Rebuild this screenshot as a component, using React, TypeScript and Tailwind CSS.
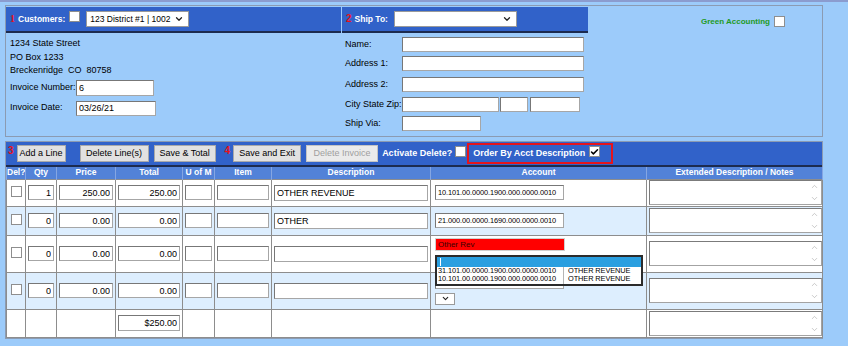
import React from 'react';
import { ChevronDown, ChevronUp, Check } from 'lucide-react';

const inputCls =
  'h-[15px] border border-[#a6a6a6] border-t-[#777] border-l-[#777] bg-white px-[2px] leading-[13px] text-black outline-none';

const Box: React.FC<{ checked?: boolean }> = ({ checked }) => (
  <span className="inline-flex h-[11px] w-[11px] shrink-0 items-center justify-center border border-[#8e8e8e] bg-white">
    {checked && <Check size={10} strokeWidth={4} className="text-black" />}
  </span>
);

const Num: React.FC<{ n: string; className?: string }> = ({ n, className = '' }) => (
  <span className={`text-[10px] font-bold leading-none text-[#e8121a] ${className}`}>{n}</span>
);

const Field: React.FC<{ w?: string; value?: string; right?: boolean; small?: boolean; h?: string }> = ({
  w = 'w-full',
  value = '',
  right,
  small,
  h,
}) => (
  <input
    readOnly
    value={value}
    className={`${inputCls} ${w} ${h ?? ''} ${right ? 'text-right' : ''} ${small ? 'text-[7.4px] tracking-[-0.1px]' : 'text-[9px]'} block`}
  />
);

const Select: React.FC<{ w: string; value?: string }> = ({ w, value = '' }) => (
  <div className={`flex h-[16px] ${w} items-center justify-between border border-[#9a9a9a] bg-white pl-[3px] pr-[4px] text-[8.5px] text-black`}>
    <span className="whitespace-nowrap">{value}</span>
    <ChevronDown size={10} strokeWidth={3} className="shrink-0 text-[#222]" />
  </div>
);

const Notes = () => (
  <div className="flex h-[25px] w-[173px] flex-col items-end justify-between border border-[#a3a3a3] border-t-[#7b7b7b] border-l-[#7b7b7b] bg-white py-[1px] pr-[2px]">
    <ChevronUp size={9} strokeWidth={1.6} className="text-[#a8a8a8]" />
    <ChevronDown size={9} strokeWidth={1.6} className="text-[#a8a8a8]" />
  </div>
);

const Btn: React.FC<{ label: string; w: string; disabled?: boolean }> = ({ label, w, disabled }) => (
  <div
    className={`flex h-[17px] ${w} items-center justify-center border text-[9px] ${
      disabled ? 'border-[#c4c4c4] bg-[#ebebeb] text-[#9f9f9f]' : 'border-[#a9a9a9] bg-[#e1e1e1] text-black'
    }`}
  >
    {label}
  </div>
);

const TopPanel = () => (
  <div className="flex h-[132px] w-[818px] border border-[#8b9bb2] pt-[1px]">
    <div className="w-[335px]">
      <div className="flex h-[26px] items-center border-b-2 border-[#1c2b4f] bg-[#3162c9] pl-[4px]">
        <Num n="1" className="font-['Liberation_Serif',serif]" />
        <span className="ml-[3px] text-[8.5px] font-bold text-white">Customers:</span>
        <span className="ml-[4px]">
          <Box />
        </span>
        <span className="ml-[6px]">
          <Select w="w-[103px]" value="123 District #1 | 1002" />
        </span>
      </div>
      <div className="pl-[4px] pt-[4px] leading-[13.5px]">
        <div>1234 State Street</div>
        <div>PO Box 1233</div>
        <div>Breckenridge&nbsp; CO&nbsp; 80758</div>
        <div className="mt-[2px] flex items-center">
          <span className="w-[66px]">Invoice Number:</span>
          <Field w="w-[78px]" h="h-[16px]" value="6" />
        </div>
        <div className="mt-[5px] flex items-center">
          <span className="w-[66px]">Invoice Date:</span>
          <Field w="w-[80px]" value="03/26/21" />
        </div>
      </div>
    </div>
    <div className="ml-[1px] w-[246px]">
      <div className="flex h-[26px] items-center border-b-2 border-[#1c2b4f] bg-[#3162c9] pl-[4px]">
        <Num n="2" />
        <span className="ml-[3px] text-[8.5px] font-bold text-white">Ship To:</span>
        <span className="ml-[6px]">
          <Select w="w-[123px]" />
        </span>
      </div>
      <div className="pl-[3px]">
        <div className="mt-[4px] flex items-center">
          <span className="w-[57px]">Name:</span>
          <Field w="w-[182px]" />
        </div>
        <div className="mt-[4px] flex items-center">
          <span className="w-[57px]">Address 1:</span>
          <Field w="w-[182px]" />
        </div>
        <div className="mt-[6px] flex items-center">
          <span className="w-[57px]">Address 2:</span>
          <Field w="w-[182px]" />
        </div>
        <div className="mt-[5px] flex items-center">
          <span className="w-[57px] whitespace-nowrap">City State Zip:</span>
          <Field w="w-[97px]" />
          <span className="ml-[1px]">
            <Field w="w-[28px]" />
          </span>
          <span className="ml-[2px]">
            <Field w="w-[50px]" />
          </span>
        </div>
        <div className="mt-[4px] flex items-center">
          <span className="w-[57px]">Ship Via:</span>
          <Field w="w-[79px]" />
        </div>
      </div>
    </div>
    <div className="flex flex-1 justify-end pr-[37px] pt-[9px]">
      <div className="flex h-[11px] items-center">
        <span className="mr-[4px] text-[8px] font-bold text-[#1f9a1f]">Green Accounting</span>
        <Box />
      </div>
    </div>
  </div>
);

type Line = { qty: string; price: string; total: string; desc: string; acct?: string; light?: boolean };

const lines: Line[] = [
  { qty: '1', price: '250.00', total: '250.00', desc: 'OTHER REVENUE', acct: '10.101.00.0000.1900.000.0000.0010' },
  { qty: '0', price: '0.00', total: '0.00', desc: 'OTHER', acct: '21.000.00.0000.1690.000.0000.0010', light: true },
];

const td = 'border border-[#8d8d8d] px-[2px] align-middle';

const Row: React.FC<{ l: Line; h: string; account: React.ReactNode; acctTop?: boolean }> = ({ l, h, account, acctTop }) => (
  <tr className={`${h} ${l.light ? 'bg-[#ddeefe]' : 'bg-white'}`}>
    <td className={`${td} text-center`}>
      <span className="inline-flex pt-[2px]">
        <Box />
      </span>
    </td>
    <td className={td}>
      <Field right value={l.qty} />
    </td>
    <td className={td}>
      <Field right value={l.price} />
    </td>
    <td className={td}>
      <Field right value={l.total} />
    </td>
    <td className={td}>
      <Field />
    </td>
    <td className={td}>
      <Field />
    </td>
    <td className={td}>
      <Field value={l.desc} h="h-[16px]" />
    </td>
    <td className={`border border-[#8d8d8d] pl-[4px] ${acctTop ? 'align-top' : 'align-middle'}`}>{account}</td>
    <td className={td}>
      <Notes />
    </td>
  </tr>
);

const LinesPanel = () => (
  <div className="mt-[4px] w-[818px] border border-[#8b9bb2]">
    <div className="flex h-[25px] items-center border-b-2 border-[#1c2b4f] bg-[#3162c9] pl-[2px]">
      <Num n="3" className="-mt-[5px]" />
      <span className="ml-[3px]">
        <Btn label="Add a Line" w="w-[49px]" />
      </span>
      <span className="ml-[14px]">
        <Btn label="Delete Line(s)" w="w-[69px]" />
      </span>
      <span className="ml-[5px]">
        <Btn label="Save & Total" w="w-[62px]" />
      </span>
      <Num n="4" className="-mt-[5px] ml-[9px]" />
      <span className="ml-[3px]">
        <Btn label="Save and Exit" w="w-[68px]" />
      </span>
      <span className="ml-[5px]">
        <Btn label="Delete Invoice" w="w-[72px]" disabled />
      </span>
      <span className="ml-[4px] text-[9px] font-bold text-white">Activate Delete?</span>
      <span className="ml-[3px]">
        <Box />
      </span>
      <div className="ml-[1px] flex h-[21px] w-[146px] items-center border-2 border-[#e5141c] pl-[4px]">
        <span className="text-[9px] font-bold text-white">Order By Acct Description</span>
        <span className="ml-[4px]">
          <Box checked />
        </span>
      </div>
    </div>
    <table className="w-[816px] table-fixed border-collapse">
      <colgroup>
        <col className="w-[19px]" />
        <col className="w-[31px]" />
        <col className="w-[59px]" />
        <col className="w-[67px]" />
        <col className="w-[32px]" />
        <col className="w-[57px]" />
        <col className="w-[159px]" />
        <col className="w-[216px]" />
        <col className="w-[176px]" />
      </colgroup>
      <thead>
        <tr className="h-[12px] bg-[#5282d8] text-[8.5px] font-bold leading-[11px] text-white">
          {['Del?', 'Qty', 'Price', 'Total', 'U of M', 'Item', 'Description', 'Account', 'Extended Description / Notes'].map(
            (c) => (
              <th key={c} className="overflow-hidden whitespace-nowrap border-x border-[#85a6e2] p-0 text-center">
                {c}
              </th>
            )
          )}
        </tr>
      </thead>
      <tbody>
        <Row l={lines[0]} h="h-[27px]" account={<Field w="w-[129px]" small value={lines[0].acct} />} />
        <Row l={lines[1]} h="h-[29px]" account={<Field w="w-[129px]" small value={lines[1].acct} />} />
        <Row
          l={{ qty: '0', price: '0.00', total: '0.00', desc: '' }}
          h="h-[37px]"
          acctTop
          account={
            <div className="pt-[2px]">
              <div className="h-[13px] w-[130px] border border-[#cfcfcf] bg-[#ff0000] pl-[2px] text-[8px] leading-[11px] text-[#3a0000]">
                Other Rev
              </div>
              <div className="relative mt-[4px] w-[129px]">
                <Field w="w-[129px]" small />
                <div className="absolute left-0 top-0 z-10 h-[31px] w-[208px] border-2 border-[#2b2b2b] bg-white">
                  <div className="flex h-[10px] items-center bg-[#2a9fe0] pl-[3px]">
                    <span className="h-[8px] w-[1px] bg-white" />
                  </div>
                  {['31.101.00.0000.1900.000.0000.0010', '10.101.00.0000.1900.000.0000.0010'].map((a) => (
                    <div key={a} className="flex text-[7.4px] leading-[8.5px] tracking-[-0.1px] text-black">
                      <span className="w-[127px] border-r border-[#b5b5b5] pl-[1px]">{a}</span>
                      <span className="pl-[4px]">OTHER REVENUE</span>
                    </div>
                  ))}
                </div>
              </div>
            </div>
          }
        />
        <Row
          l={{ qty: '0', price: '0.00', total: '0.00', desc: '', light: true }}
          h="h-[37px]"
          acctTop
          account={
            <div className="pt-[1px]">
              <Field w="w-[129px]" small />
              <div className="mt-[4px] flex h-[12px] w-[20px] items-center justify-center border border-[#9a9a9a] bg-white">
                <ChevronDown size={9} strokeWidth={3} className="text-[#222]" />
              </div>
            </div>
          }
        />
        <tr className="h-[28px] bg-white">
          <td className={td} />
          <td className={td} />
          <td className={td} />
          <td className={td}>
            <Field right value="$250.00" h="h-[16px]" />
          </td>
          <td className={td} />
          <td className={td} />
          <td className={td} />
          <td className={td} />
          <td className={td}>
            <Notes />
          </td>
        </tr>
      </tbody>
    </table>
  </div>
);

export default function App() {
  return (
    <div className="min-h-[346px] w-[848px] border-t-2 border-[#8b9ccf] bg-[#9ccbfa] pl-[5px] pt-[3px] font-['Liberation_Sans',Arial,sans-serif] text-[9px] text-black">
      <TopPanel />
      <LinesPanel />
    </div>
  );
}
